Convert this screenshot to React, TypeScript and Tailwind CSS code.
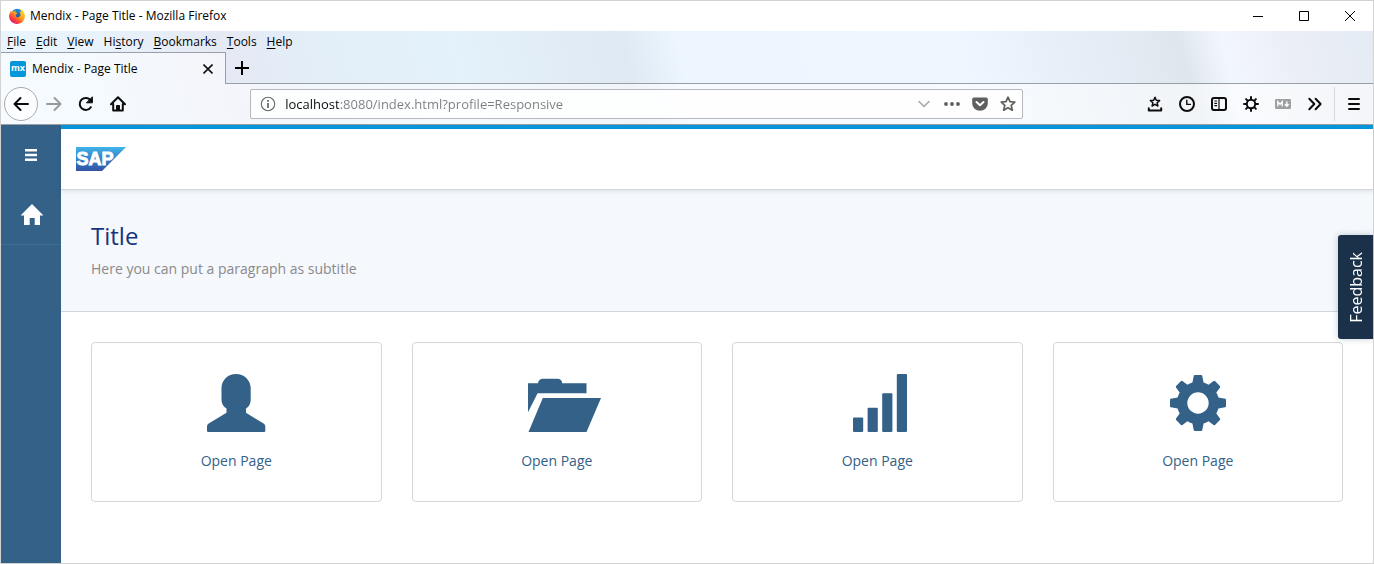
import type { ReactNode } from 'react';

const menus = [
  ['', 'F', 'ile'],
  ['', 'E', 'dit'],
  ['', 'V', 'iew'],
  ['Hi', 's', 'tory'],
  ['', 'B', 'ookmarks'],
  ['', 'T', 'ools'],
  ['', 'H', 'elp'],
];

function FirefoxLogo() {
  return (
    <svg viewBox="0 0 16 16" className="size-4" aria-hidden="true">
      <defs>
        <linearGradient id="fx-flame" x1="0.85" y1="0.1" x2="0.2" y2="0.9">
          <stop offset="0" stopColor="#ffe226" />
          <stop offset="0.45" stopColor="#ff9a1c" />
          <stop offset="0.8" stopColor="#ff3a3f" />
          <stop offset="1" stopColor="#e3126b" />
        </linearGradient>
        <linearGradient id="fx-globe" x1="0" y1="0" x2="0" y2="1">
          <stop offset="0" stopColor="#1b8fe0" />
          <stop offset="1" stopColor="#2a3a86" />
        </linearGradient>
      </defs>
      <circle cx="8.2" cy="7.2" r="6.4" fill="url(#fx-globe)" />
      <path
        d="M1.6 2.2C1.8 3 2.2 3.4 2.7 3.7 3.4 3.3 4.3 3.4 5 3.6 5.4 2.9 6 2.5 6.7 2.3 6.2 3 6.2 3.8 6.8 4.3L8.4 5C8.2 5.8 7 6 6.8 7 6.7 8.8 8 9.6 9.3 9.2 10.9 8.8 11.6 7.6 11.4 6.2 11.2 4.8 10.6 3.9 9.8 3.2 11 3.3 11.9 3.8 12.4 4.5 12.2 2.8 11.2 1.6 9.9 0.6 13.6 1.4 16 4.4 15.9 8.2 15.8 12.6 12.4 15.9 8 15.9 3.6 15.9 0.2 12.5 0.1 8.3 0.1 6.4 0.7 4.8 1.5 3.9Z"
        fill="url(#fx-flame)"
      />
    </svg>
  );
}

function ToolIcon({ children, className = 'text-[#0c0c0d]' }: { children: ReactNode; className?: string }) {
  return (
    <svg
      viewBox="0 0 16 16"
      className={`size-4 ${className}`}
      fill="none"
      stroke="currentColor"
      strokeWidth="2"
      strokeLinecap="round"
      strokeLinejoin="round"
      aria-hidden="true"
    >
      {children}
    </svg>
  );
}

function ToolButton({ label, children }: { label: string; children: ReactNode }) {
  return (
    <button type="button" aria-label={label} className="flex size-8 shrink-0 items-center justify-center">
      {children}
    </button>
  );
}

function TitleBar() {
  const button = 'flex h-full w-[46px] items-center justify-center';
  return (
    <div className="flex h-[30px] items-center bg-white pl-2">
      <FirefoxLogo />
      <span className="ml-[5px] flex-1 text-black">Mendix - Page Title - Mozilla Firefox</span>
      <button type="button" aria-label="Minimize" className={button}>
        <svg viewBox="0 0 12 12" className="size-3" stroke="#000" fill="none" aria-hidden="true">
          <path d="M1 6.5H11" />
        </svg>
      </button>
      <button type="button" aria-label="Maximize" className={button}>
        <svg viewBox="0 0 12 12" className="size-3" stroke="#000" fill="none" aria-hidden="true">
          <path d="M1.5 1.5H10.5V10.5H1.5Z" />
        </svg>
      </button>
      <button type="button" aria-label="Close" className={button}>
        <svg viewBox="0 0 12 12" className="size-3" stroke="#000" fill="none" aria-hidden="true">
          <path d="M1 1L11 11M11 1L1 11" />
        </svg>
      </button>
    </div>
  );
}

function TabStrip() {
  return (
    <div className="flex h-8">
      <div className="flex w-[225px] items-center border-t border-r border-[#9a9ea8] bg-white/55 pl-[9px]">
        <span className="flex size-4 items-center justify-center rounded-[2px] bg-[#0595db] text-[9px] leading-none font-bold text-white">
          <span className="-mt-0.5">mx</span>
        </span>
        <span className="ml-1.5 flex-1 text-black">Mendix - Page Title</span>
        <button type="button" aria-label="Close tab" className="mr-[9px] flex size-4 items-center justify-center">
          <svg viewBox="0 0 10 10" className="size-2.5" stroke="#111" strokeWidth="1.6" fill="none" aria-hidden="true">
            <path d="M0.5 0.5L9.5 9.5M9.5 0.5L0.5 9.5" />
          </svg>
        </button>
      </div>
      <div className="flex flex-1 border-b border-[#9a9ea8]">
        <ToolButton label="New tab">
          <svg viewBox="0 0 14 14" className="size-3.5" stroke="#000" strokeWidth="2" fill="none" aria-hidden="true">
            <path d="M7 0V14M0 7H14" />
          </svg>
        </ToolButton>
      </div>
    </div>
  );
}

function AddressBar() {
  return (
    <div className="flex h-[30px] flex-[13] items-center rounded-[2px] border border-[#b5b8be] bg-white/85 pr-1.5 pl-[9px]">
      <svg viewBox="0 0 16 16" className="size-4 shrink-0" fill="none" stroke="#6a6a6b" aria-hidden="true">
        <circle cx="8" cy="8" r="6.7" strokeWidth="1.1" />
        <path d="M8 7V12" strokeWidth="1.8" />
        <path d="M8 4V5.8" strokeWidth="1.8" />
      </svg>
      <input
        type="text"
        aria-label="Address"
        defaultValue="localhost:8080/index.html?profile=Responsive"
        className="ml-[9px] min-w-0 flex-1 bg-[linear-gradient(90deg,#0c0c0d_54px,#7d7d7e_54px)] bg-clip-text text-[13px] text-transparent caret-black outline-none"
      />
      <div className="flex items-center gap-3">
        <button type="button" aria-label="Show history">
          <ToolIcon className="text-[#a9a9aa]">
            <path d="M3 5.5L8 10.5L13 5.5" strokeWidth="1.6" />
          </ToolIcon>
        </button>
        <button type="button" aria-label="Page actions">
          <ToolIcon className="text-[#5f5f60]">
            <path d="M2 8H2.01M8 8H8.01M14 8H14.01" strokeWidth="3.8" />
          </ToolIcon>
        </button>
        <button type="button" aria-label="Save to Pocket">
          <ToolIcon className="text-[#5f5f60]">
            <path d="M1.8 1.5H14.2Q15.8 1.5 15.8 3V7.5A7.8 7.3 0 0 1 0.2 7.5V3Q0.2 1.5 1.8 1.5Z" fill="currentColor" stroke="none" />
            <path d="M4.5 6L8 9.2L11.5 6" stroke="#fff" />
          </ToolIcon>
        </button>
        <button type="button" aria-label="Bookmark this page">
          <ToolIcon className="text-[#5f5f60]">
            <path d="M8 1.2L10 5.6L14.8 6.1L11.2 9.3L12.3 14.2L8 11.7L3.7 14.2L4.8 9.3L1.2 6.1L6 5.6Z" strokeWidth="1.7" />
          </ToolIcon>
        </button>
      </div>
    </div>
  );
}

function NavBar() {
  return (
    <div className="flex h-[41px] items-center border-b border-[#9da1a6] bg-white/55">
      <button
        type="button"
        aria-label="Back"
        className="ml-[3px] flex size-[34px] shrink-0 items-center justify-center rounded-full border border-[#a8aaae] bg-white/80"
      >
        <ToolIcon>
          <path d="M15 8H1.5M7.5 2L1.5 8L7.5 14" />
        </ToolIcon>
      </button>
      <ToolButton label="Forward">
        <ToolIcon className="text-[#98999b]">
          <path d="M1 8H14.5M8.5 2L14.5 8L8.5 14" />
        </ToolIcon>
      </ToolButton>
      <ToolButton label="Reload">
        <ToolIcon>
          <path d="M12.8 11.2A6 6 0 1 1 12.6 4.4" />
          <path d="M14.4 1.2V6.8H8.8Z" fill="currentColor" strokeWidth="1" />
        </ToolIcon>
      </ToolButton>
      <ToolButton label="Home">
        <ToolIcon>
          <path d="M1 8.3L8 1.3L15 8.3M3.2 8V14.6H12.8V8" />
          <path d="M6.5 14V9.5H9.5V14Z" fill="currentColor" strokeWidth="1" />
        </ToolIcon>
      </ToolButton>
      <div className="flex-[2]" />
      <AddressBar />
      <div className="flex-[2]" />
      <ToolButton label="View bookmarks">
        <ToolIcon>
          <path d="M8 1.2L9.3 4.3L12.6 4.6L10.1 6.8L10.9 10L8 8.3L5.1 10L5.9 6.8L3.4 4.6L6.7 4.3Z" strokeWidth="1.5" />
          <path d="M1.8 12.2V14.4H14.2V12.2" />
        </ToolIcon>
      </ToolButton>
      <ToolButton label="History">
        <ToolIcon>
          <circle cx="8" cy="8" r="7" />
          <path d="M7.8 4.2V8.4H11.4" strokeWidth="1.4" />
        </ToolIcon>
      </ToolButton>
      <ToolButton label="Sidebars">
        <ToolIcon>
          <rect x="1" y="2" width="14" height="12" rx="2" />
          <path d="M8 2V14M3.8 5H5.6M3.8 7.3H5.6M3.8 9.6H5.6" strokeWidth="1.2" />
        </ToolIcon>
      </ToolButton>
      <ToolButton label="Options">
        <ToolIcon>
          <circle cx="8" cy="8" r="4.2" />
          <path d="M8 1V3M8 13V15M1 8H3M13 8H15M3.1 3.1L4.6 4.6M11.4 11.4L12.9 12.9M3.1 12.9L4.6 11.4M11.4 4.6L12.9 3.1" />
        </ToolIcon>
      </ToolButton>
      <ToolButton label="Markdown">
        <ToolIcon className="text-[#a0a0a2]">
          <rect x="0" y="3" width="16" height="10" rx="1.2" fill="currentColor" stroke="none" />
          <path d="M2.8 10.3V5.9L5 8.3L7.2 5.9V10.3M11.8 5.6V9.6M9.9 8.3L11.8 10.2L13.7 8.3" stroke="#fff" strokeWidth="1.4" strokeLinecap="butt" strokeLinejoin="miter" />
        </ToolIcon>
      </ToolButton>
      <ToolButton label="More tools">
        <ToolIcon>
          <path d="M2.3 2.8L7.3 8L2.3 13.2M8.6 2.8L13.6 8L8.6 13.2" />
        </ToolIcon>
      </ToolButton>
      <div className="ml-[3px] h-[34px] w-px bg-[#d5d7da]" />
      <div className="mr-[3px] ml-[3px]">
        <ToolButton label="Open menu">
          <ToolIcon>
            <path d="M3 3H13M3 8H13M3 13H13" />
          </ToolIcon>
        </ToolButton>
      </div>
    </div>
  );
}

function SapLogo() {
  return (
    <svg viewBox="0 0 50 24" className="h-6 w-[50px]" role="img" aria-label="SAP">
      <defs>
        <linearGradient id="sap-blue" x1="0" y1="0" x2="0" y2="1">
          <stop offset="0" stopColor="#3fb4ea" />
          <stop offset="0.5" stopColor="#3380c8" />
          <stop offset="1" stopColor="#3353a4" />
        </linearGradient>
      </defs>
      <path d="M0 0H50L26 24H0Z" fill="url(#sap-blue)" />
      <text
        x="0.5"
        y="18"
        fontSize="18"
        fontWeight="700"
        fill="#fff"
        stroke="#fff"
        strokeWidth="0.9"
        fontFamily="'Liberation Sans', sans-serif"
      >
        SAP
      </text>
    </svg>
  );
}

function Glyph({ children }: { children: ReactNode }) {
  return (
    <svg viewBox="0 0 58 58" className="size-[58px] overflow-visible" fill="currentColor" aria-hidden="true">
      {children}
    </svg>
  );
}

const cards = [
  {
    id: 'user',
    icon: (
      <path d="M29 0C37 0 43.7 6.2 43.7 14V26C43.7 29.5 42 33 39 34.5V38.8L56.6 49.6Q58.3 50.8 58.3 52.5V57Q58.3 58 57.3 58H1Q0 58 0 57V52.5Q0 50.8 1.7 49.6L19.5 38.8V34.5C16.5 33 14.5 29.5 14.5 26V14C14.5 6.2 21 0 29 0Z" />
    ),
  },
  {
    id: 'folder',
    icon: (
      <path d="M0 9.2H10C10.4 6.4 12.2 4.7 15 4.7H29.5C32.2 4.7 34 6.4 34.2 9.2H58.5V19.3H9.6L0 38.3ZM14.8 24H73L58.5 58H0.5Z" />
    ),
  },
  {
    id: 'signal',
    icon: (
      <>
        <rect x="5" y="43.4" width="10.2" height="14.6" rx="1" />
        <rect x="19.6" y="33.8" width="10.2" height="24.2" rx="1" />
        <rect x="34.2" y="19.2" width="10.2" height="38.8" rx="1" />
        <rect x="48.8" y="0" width="10.2" height="58" rx="1" />
      </>
    ),
  },
  {
    id: 'cog',
    icon: (
      <g transform="translate(29 29)">
        <path
          fillRule="evenodd"
          d="M-3.2-28H3.2Q4-28 4.2-27.2L5.6-20.4Q8.2-19.6 10.6-18.3L15.6-22Q16.3-22.5 17-21.9L21.9-17Q22.5-16.3 22-15.6L18.3-10.6Q19.6-8.2 20.4-5.6L27.2-4.2Q28-4 28-3.2V3.2Q28 4 27.2 4.2L20.4 5.6Q19.6 8.2 18.3 10.6L22 15.6Q22.5 16.3 21.9 17L17 21.9Q16.3 22.5 15.6 22L10.6 18.3Q8.2 19.6 5.6 20.4L4.2 27.2Q4 28 3.2 28H-3.2Q-4 28-4.2 27.2L-5.6 20.4Q-8.2 19.6-10.6 18.3L-15.6 22Q-16.3 22.5-17 21.9L-21.9 17Q-22.5 16.3-22 15.6L-18.3 10.6Q-19.6 8.2-20.4 5.6L-27.2 4.2Q-28 4-28 3.2V-3.2Q-28-4-27.2-4.2L-20.4-5.6Q-19.6-8.2-18.3-10.6L-22-15.6Q-22.5-16.3-21.9-17L-17-21.9Q-16.3-22.5-15.6-22L-10.6-18.3Q-8.2-19.6-5.6-20.4L-4.2-27.2Q-4-28-3.2-28ZM0-10.7A10.7 10.7 0 1 0 0 10.7A10.7 10.7 0 1 0 0-10.7Z"
        />
      </g>
    ),
  },
];

function Sidebar() {
  return (
    <nav className="w-[60px] shrink-0 bg-[#336188] text-white">
      <button type="button" aria-label="Toggle sidebar" className="flex h-[59px] w-full items-center justify-center">
        <svg viewBox="0 0 12 12" className="size-3" fill="currentColor" aria-hidden="true">
          <path d="M0 0H12V2.6H0ZM0 4.7H12V7.3H0ZM0 9.4H12V12H0Z" />
        </svg>
      </button>
      <a href="#home" aria-label="Home" className="flex h-[61px] items-center justify-center border-b border-[#3d6f96] pl-0.5">
        <svg viewBox="0 0 22 21" className="h-[21px] w-[22px]" fill="currentColor" aria-hidden="true">
          <path d="M11 0L22 11V11.5H19V21H13.7V14H8.7V21H3V11.5H0V11Z" />
        </svg>
      </a>
    </nav>
  );
}

export default function App() {
  return (
    <div className="flex min-h-screen flex-col border border-[#d2d2d2] bg-white font-['Open_Sans','Noto_Sans',sans-serif] text-[12px] leading-4">
      <TitleBar />
      <div className="bg-[linear-gradient(75deg,#e9f5fe_0%,#e8f3fc_8%,#e5e9f4_17%,#e3eef8_24%,#e4f2fb_34%,#e1ebf5_42%,#dfe9f3_46%,#edf6fe_50%,#eef6ff_70%,#e6eff7_78%,#dfe7ee_86%,#f2f7fd_89%,#ebeff5_94%,#e4ebf4_100%)]">
        <div className="flex h-[21px] items-center gap-2.5 pl-1.5 text-black" role="menubar">
          {menus.map(([before, key, after]) => (
            <button type="button" role="menuitem" key={key + after}>
              {before}
              <span className="underline underline-offset-2">{key}</span>
              {after}
            </button>
          ))}
        </div>
        <TabStrip />
        <NavBar />
      </div>

      <div className="relative flex flex-1">
        <Sidebar />
        <div className="min-w-0 flex-1">
          <header className="relative flex h-[65px] items-center border-t-4 border-b border-t-[#0595db] border-b-[#d3d5d8] bg-white pl-[15px] shadow-[0_2px_4px_rgba(0,0,0,0.08)]">
            <SapLogo />
          </header>
          <section className="border-b border-[#d3d5d8] bg-[#f5f8fd] px-[30px] pt-[30px] pb-8">
            <h1 className="text-[24px] leading-8 text-[#17347a]">Title</h1>
            <p className="mt-[7px] text-[14px] leading-5 text-[#8a8a8a]">Here you can put a paragraph as subtitle</p>
          </section>
          <main className="grid grid-cols-4 gap-[30px] p-[30px]">
            {cards.map(({ id, icon }) => (
              <a
                key={id}
                href={`#${id}`}
                className="flex flex-col items-center rounded border border-[#d7d7d7] bg-white p-[30px] text-[#336188]"
              >
                <span className="flex h-15 items-center">
                  <Glyph>{icon}</Glyph>
                </span>
                <span className="mt-[18px] text-[14px] leading-5">Open Page</span>
              </a>
            ))}
          </main>
        </div>
        <button
          type="button"
          className="absolute top-[110px] right-0 flex h-[104px] w-[35px] items-center justify-center rounded-l-[3px] bg-[#1b3149] text-[16px] leading-6 font-medium text-white shadow-[0_0_6px_rgba(27,49,73,0.25)]"
        >
          <span className="rotate-180 [writing-mode:vertical-rl]">Feedback</span>
        </button>
      </div>
    </div>
  );
}
